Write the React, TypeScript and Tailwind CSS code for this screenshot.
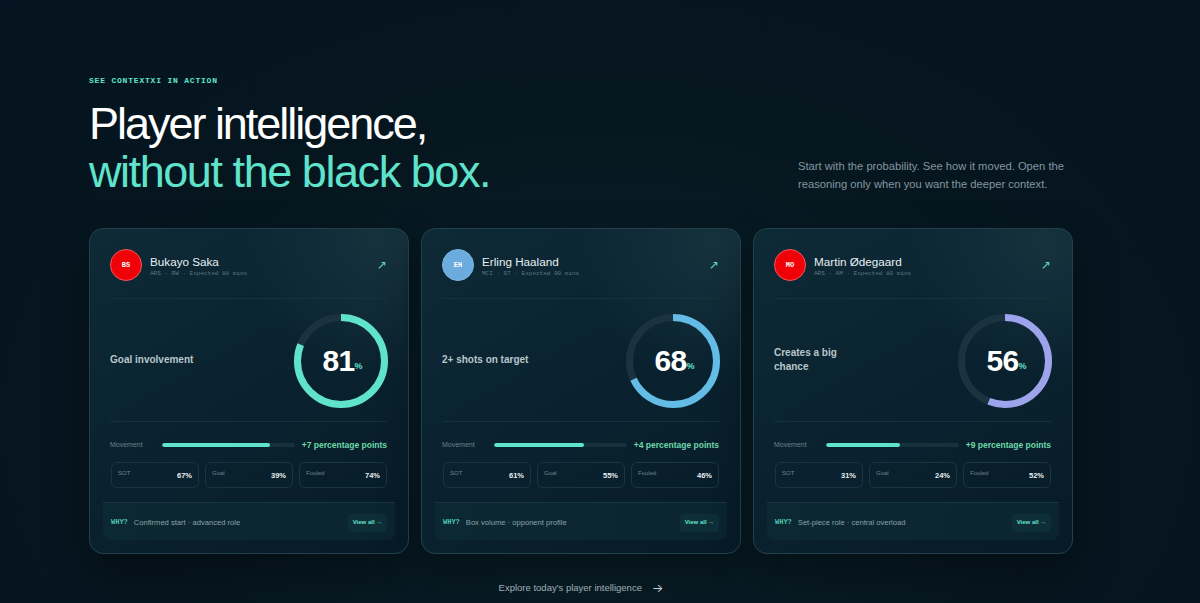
import React from "react";

interface PlayerCardProps {
  initials: string;
  avatarClass: string;
  name: string;
  meta: string;
  market: string;
  pct: number;
  ringColor: string;
  move: string;
  stats: { label: string; value: string }[];
  why: string;
}

const players: PlayerCardProps[] = [
  {
    initials: "BS",
    avatarClass: "bg-[#ef0107] border-[#f0565a]",
    name: "Bukayo Saka",
    meta: "ARS · RW · Expected 88 mins",
    market: "Goal involvement",
    pct: 81,
    ringColor: "#5fe3cb",
    move: "+7 percentage points",
    stats: [
      { label: "SOT", value: "67%" },
      { label: "Goal", value: "39%" },
      { label: "Fouled", value: "74%" },
    ],
    why: "Confirmed start · advanced role",
  },
  {
    initials: "EH",
    avatarClass: "bg-[#6cabdd] border-[#7db6e2]",
    name: "Erling Haaland",
    meta: "MCI · ST · Expected 90 mins",
    market: "2+ shots on target",
    pct: 68,
    ringColor: "#62bce6",
    move: "+4 percentage points",
    stats: [
      { label: "SOT", value: "61%" },
      { label: "Goal", value: "55%" },
      { label: "Fouled", value: "46%" },
    ],
    why: "Box volume · opponent profile",
  },
  {
    initials: "MO",
    avatarClass: "bg-[#ef0107] border-[#f0565a]",
    name: "Martin Ødegaard",
    meta: "ARS · AM · Expected 80 mins",
    market: "Creates a big chance",
    pct: 56,
    ringColor: "#9ea4ec",
    move: "+9 percentage points",
    stats: [
      { label: "SOT", value: "31%" },
      { label: "Goal", value: "24%" },
      { label: "Fouled", value: "52%" },
    ],
    why: "Set-piece role · central overload",
  },
];

const Ring = ({ pct, color }: { pct: number; color: string }) => {
  const r = 43.5;
  const c = 2 * Math.PI * r;
  return (
    <div className="relative mr-[-1px] mt-[2px] h-[94px] w-[94px]">
      <svg width="94" height="94" viewBox="0 0 94 94" className="-rotate-90">
        <circle cx="47" cy="47" r={r} fill="none" stroke="#1b3340" strokeWidth="7" />
        <circle
          cx="47"
          cy="47"
          r={r}
          fill="none"
          stroke={color}
          strokeWidth="7"
          strokeDasharray={`${(c * pct) / 100} ${c}`}
        />
      </svg>
      <div className="absolute inset-0 flex items-center justify-center pl-[3px]">
        <span className="text-[30px] font-bold leading-none tracking-[-0.02em] text-white">{pct}</span>
        <span className="mt-[11px] text-[9px] font-bold leading-none text-[#5fe3cb]">%</span>
      </div>
    </div>
  );
};

const PlayerCard = ({ initials, avatarClass, name, meta, market, pct, ringColor, move, stats, why }: PlayerCardProps) => (
  <div className="flex h-[326px] w-[320px] flex-col rounded-[14px] border border-[#21424d] bg-[radial-gradient(circle_at_92%_4%,#16323d_0%,rgba(22,50,61,0)_32%),linear-gradient(150deg,#0e2a36_0%,#0a2230_50%,#071b27_100%)] px-[13px] pt-[20px] shadow-[0_18px_40px_rgba(0,0,0,0.35)]">
    <div className="ml-[7px] mr-[8px] flex h-[50px] items-start border-b border-[#17323e]">
      <div className={`flex h-[32px] w-[32px] items-center justify-center rounded-full border font-['Liberation_Mono',monospace] text-[7px] font-bold text-white ${avatarClass}`}>
        {initials}
      </div>
      <div className="ml-[8px] min-w-0 flex-1 pt-[5px]">
        <div className="text-[11.7px] font-medium leading-[16px] text-[#e8eff1]">{name}</div>
        <div className="font-['Liberation_Mono',monospace] text-[6px] leading-[8px] text-[#5f7682]">{meta}</div>
      </div>
      <span className="mt-[8px] font-['DejaVu_Sans',sans-serif] text-[12px] leading-[16px] text-[#5fd8c0]">↗</span>
    </div>
    <div className="ml-[7px] mr-[8px] flex h-[123px] items-center justify-between border-b border-[#17323e]">
      <div className="w-[95px] text-[10px] font-bold leading-[14px] text-[#b7c6cb]">{market}</div>
      <Ring pct={pct} color={ringColor} />
    </div>
    <div className="ml-[7px] mr-[8px] mt-[17px] flex h-[12px] items-center">
      <span className="w-[52px] text-[7px] text-[#6a808a]">Movement</span>
      <div className="h-[4px] w-[133px] overflow-hidden rounded-full bg-[#16303c]">
        <div className="h-full rounded-full bg-[#5fe3cb]" style={{ width: `${pct}%` }} />
      </div>
      <span className="ml-auto text-[8.5px] font-bold text-[#6ed9a8]">{move}</span>
    </div>
    <div className="mx-[8px] mt-[11px] grid grid-cols-3 gap-[6px]">
      {stats.map((s) => (
        <div key={s.label} className="flex h-[26px] w-[88px] justify-between rounded-[6px] border border-[#1a3541] pl-[6px] pr-[6px] pt-[6px]">
          <span className="text-[6px] leading-[9px] text-[#6d848f]">{s.label}</span>
          <span className="mt-[2px] text-[7.5px] font-bold leading-[10px] text-[#e8eff1]">{s.value}</span>
        </div>
      ))}
    </div>
    <div className="mt-[14px] flex h-[38px] items-center rounded-b-[8px] border-t border-[#183641] bg-[linear-gradient(90deg,#0c2833_0%,#0a2530_100%)] pl-[8px] pr-[8px] pt-[2px]">
      <span className="font-['Liberation_Mono',monospace] text-[7px] font-bold text-[#4fc9b4]">WHY?</span>
      <span className="ml-[6px] text-[7.6px] text-[#8ba0a8]">{why}</span>
      <span className="ml-auto flex h-[18px] w-[39px] items-center justify-center rounded-[4px] bg-[#0f2f38] text-[6px] font-bold text-[#5fe3cb]">
        View all →
      </span>
    </div>
  </div>
);

export default function App() {
  return (
    <div className="h-[603px] w-[1200px] overflow-hidden bg-[radial-gradient(ellipse_at_50%_70%,#0a2029_0%,#06161f_55%,#051420_100%)] font-['Liberation_Sans',sans-serif]">
      <div className="ml-[89px] w-[984px] pt-[76px]">
        <div className="font-['Liberation_Mono',monospace] text-[8px] font-bold leading-[10px] tracking-[0.1em] text-[#5fe3cb]">
          SEE CONTEXTXI IN ACTION
        </div>
        <div className="mt-[14px] flex items-end justify-between">
          <h1 className="text-[45px] font-normal leading-[48px] text-white">
            <span className="tracking-[-0.045em]">Player intelligence,</span>
            <br />
            <span className="tracking-[-0.032em] text-[#5fe3cb]">without the black box.</span>
          </h1>
          <p className="mb-[3px] w-[275px] text-[11.2px] leading-[18px] text-[#8496a0]">
            Start with the probability. See how it moved. Open the reasoning only when you want the deeper context.
          </p>
        </div>
        <div className="mt-[32px] flex gap-[12px]">
          {players.map((p) => (
            <PlayerCard key={p.name} {...p} />
          ))}
        </div>
        <div className="mt-[27px] flex items-center justify-center text-[9.5px] leading-[14px] text-[#9fb0b8]">
          <span>Explore today's player intelligence</span>
          <span className="ml-[10px] font-['Inter',sans-serif] text-[12px] text-[#c6d3d8]">→</span>
        </div>
      </div>
    </div>
  );
}
